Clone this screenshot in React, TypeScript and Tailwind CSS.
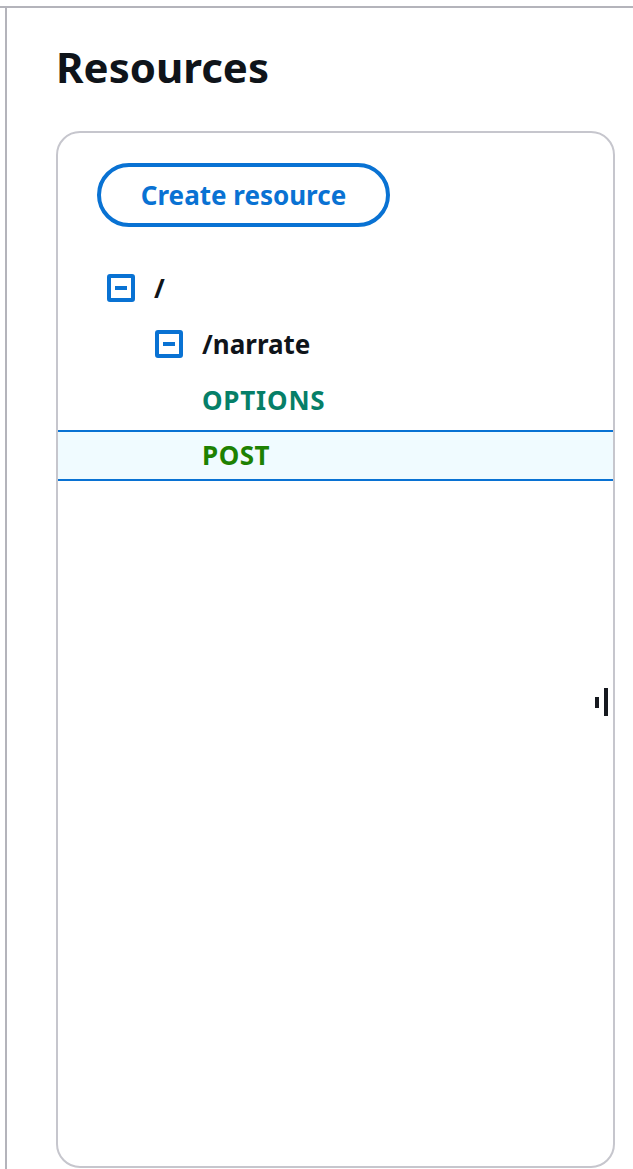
import React from "react";

const font = { fontFamily: '"Noto Sans", "Open Sans", sans-serif' };

function MinusBox() {
    return (
        <span className="flex items-center justify-center w-[28px] h-[28px] border-[4px] border-[#0972d3] rounded-[3px] shrink-0">
            <span className="block w-[12px] h-[4px] bg-[#0972d3]" />
        </span>
    );
}

export default function App() {
    return (
        <div className="w-full h-[1169px] overflow-hidden bg-white pt-[6px]" style={font}>
            <div className="border-t-2 border-[#b4b4bb] h-full">
                <div className="ml-[5px] border-l-2 border-[#b4b4bb] h-full pl-[49px]">
                    {/* Heading */}
                    <h2 className="pt-[33px] text-[42px] leading-[52px] font-bold text-[#0f141a]">
                        Resources
                    </h2>

                    {/* Panel */}
                    <div className="relative mt-[38px] w-[559px] h-[1037px] border-2 border-[#c6c6cd] rounded-[24px]">
                        <div className="pt-[30px] pl-[39px]">
                            <button className="h-[64px] w-[293px] border-[4px] border-[#0972d3] rounded-full text-[#0972d3] text-[26px] font-bold leading-none">
                                Create resource
                            </button>
                        </div>

                        <div className="mt-[33px]">
                            <div className="h-[56px] flex items-center gap-[19px] pl-[49px]">
                                <MinusBox />
                                <span className="text-[26px] font-bold text-[#0f141a]">/</span>
                            </div>
                            <div className="h-[56px] flex items-center gap-[19px] pl-[97px]">
                                <MinusBox />
                                <span className="text-[26px] font-bold text-[#0f141a]">/narrate</span>
                            </div>
                            <div className="h-[56px] flex items-center pl-[144px]">
                                <span className="text-[26px] font-bold tracking-[0.8px] text-[#067f68]">OPTIONS</span>
                            </div>
                            <div className="mt-[2px] h-[51px] flex items-center pl-[144px] border-y-2 border-[#0972d3] bg-[#f0fbff]">
                                <span className="text-[26px] font-bold tracking-[0.5px] text-[#1d8102]">POST</span>
                            </div>
                        </div>

                        {/* resize handle */}
                        <div className="absolute top-[555px] right-[5px] flex items-center gap-[5px]">
                            <span className="block w-[4px] h-[11px] bg-[#16191f]" />
                            <span className="block w-[4px] h-[28px] bg-[#16191f]" />
                        </div>
                    </div>
                </div>
            </div>
        </div>
    );
}
